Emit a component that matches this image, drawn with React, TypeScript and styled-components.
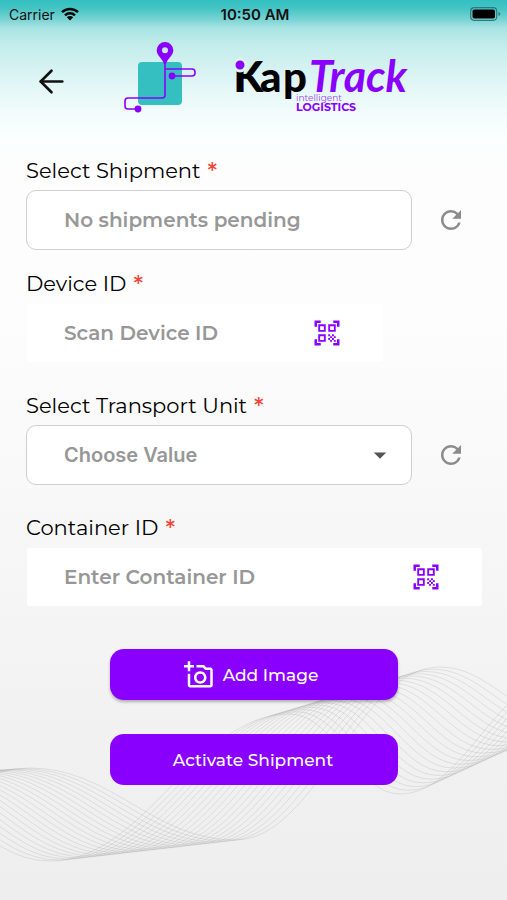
import React, { useId } from "react";
import styled, { createGlobalStyle } from "styled-components";
import { ArrowLeft } from "lucide-react";
import { MdArrowDropDown, MdOutlineAddAPhoto, MdQrCodeScanner, MdRefresh } from "react-icons/md";

const purple = "#8a00ff";
const teal = "#36bfc1";

const GlobalStyle = createGlobalStyle`
  * { box-sizing: border-box; }
  body {
    margin: 0;
    font-family: Montserrat, Inter, "Liberation Sans", sans-serif;
    color: #111;
  }
  button, input, select { font: inherit; }
`;

const Screen = styled.div`
  position: relative;
  isolation: isolate;
  min-height: 100vh;
  overflow: hidden;
  background:
    linear-gradient(180deg, #33bfc0 0, #44c4c5 8px, #72d1d1 18px, #a8e3e3 28px, #c2eceb 44px, #e2f6f6 84px, #f4fcfc 116px, #fbffff 140px, rgba(253, 253, 253, 0) 172px),
    linear-gradient(180deg, #fefefe 0, #fdfdfd 300px, #f8f8f8 500px, #f2f2f2 700px, #eeeeee 900px);
`;

const Waves = styled.svg`
  position: absolute;
  z-index: -1;
  left: 0;
  top: 650px;
  width: 100%;
  height: 230px;
  fill: none;
  stroke: #8c8c8c;
  stroke-opacity: 0.22;
  stroke-width: 0.9;
`;

const StatusBar = styled.div`
  display: grid;
  grid-template-columns: 1fr auto 1fr;
  align-items: center;
  height: 28px;
  padding: 0 6px 0 9px;
  font-family: Inter, sans-serif;
  font-size: 14px;
`;

const Carrier = styled.span`
  display: flex;
  align-items: center;
  gap: 6px;
`;

const Clock = styled.time`
  font-size: 15px;
  font-weight: 600;
`;

const BatteryIcon = styled.svg`
  justify-self: end;
`;

const Header = styled.header`
  display: flex;
  align-items: center;
  height: 106px;
  padding: 0 0 8px 29px;
`;

const BackButton = styled.button`
  display: flex;
  align-items: center;
  justify-content: center;
  width: 44px;
  height: 44px;
  margin: 8px 50px 0 0;
  padding: 0;
  border: 0;
  background: none;
  color: #111;
`;

const Brand = styled.svg`
  flex: none;
`;

const WordmarkSvg = styled(Brand)`
  margin-left: 38px;
  font-family: Lato, sans-serif;
`;

const Form = styled.form`
  display: flex;
  flex-direction: column;
  padding: 24px 24px 0 26px;
`;

const Field = styled.div<{ $space: number }>`
  margin-bottom: ${(p) => p.$space}px;
`;

const Label = styled.label`
  display: flex;
  gap: 7px;
  height: 32px;
  color: #000;
  font-size: 21px;
  line-height: 26px;
`;

const Star = styled.span`
  font-size: 24px;
  font-weight: 500;
  line-height: 28px;
  color: #f44336;
`;

const Row = styled.div`
  display: flex;
  align-items: center;
`;

const Control = styled.div<{ $outlined?: boolean; $inset?: number }>`
  position: relative;
  flex: 1;
  min-width: 0;
  display: flex;
  align-items: center;
  height: 60px;
  margin-right: ${(p) => p.$inset ?? 0}px;
  border: 1px solid ${(p) => (p.$outlined ? "#cfcfcf" : "transparent")};
  border-radius: ${(p) => (p.$outlined ? 10 : 4)}px;
  background: #fff;
  background-clip: padding-box;
`;

const TextInput = styled.input`
  flex: 1;
  min-width: 0;
  height: 100%;
  padding: 0 0 0 37px;
  border: 0;
  outline: 0;
  border-radius: 9px;
  background: none;
  font-size: 20px;
  font-weight: 600;
  &::placeholder { color: #979797; opacity: 1; }
`;

const Select = styled.select`
  appearance: none;
  width: 100%;
  height: 100%;
  padding: 0 50px 0 37px;
  border: 0;
  outline: 0;
  border-radius: 9px;
  background: none;
  color: #979797;
  font-family: Inter, sans-serif;
  font-size: 20px;
  font-weight: 600;
`;

const Caret = styled(MdArrowDropDown)`
  position: absolute;
  right: 16px;
  color: #555;
  pointer-events: none;
`;

const ScanButton = styled.button`
  display: flex;
  align-items: center;
  justify-content: center;
  width: 44px;
  height: 44px;
  margin-right: 34px;
  padding: 0;
  border: 0;
  background: none;
  color: ${purple};
`;

const RefreshButton = styled.button`
  display: flex;
  align-items: center;
  justify-content: center;
  width: 44px;
  height: 44px;
  margin: 0 10px 0 17px;
  padding: 0;
  border: 0;
  background: none;
  color: #8b8b8b;
`;

const Actions = styled.div`
  display: flex;
  flex-direction: column;
  gap: 34px;
  margin: 0 85px 0 84px;
`;

const ActionButton = styled.button<{ $raised?: boolean }>`
  display: flex;
  align-items: center;
  justify-content: center;
  gap: 9px;
  height: 51px;
  padding: 0 ${(p) => (p.$raised ? 6 : 2)}px 0 0;
  border: 0;
  border-radius: 14px;
  background: ${purple};
  box-shadow: ${(p) => (p.$raised ? "0 2px 3px rgba(0, 0, 0, 0.28)" : "none")};
  color: #fff;
  font-size: 17px;
  font-weight: 500;
`;

type Point = [number, number];

// Alternating crests and troughs of the ribbon's two outer strands.
const outerA: Point[] = [[-170, 206], [30, 118], [235, 190], [440, 17], [560, 66], [730, 10]];
const outerB: Point[] = [[-340, 206], [-120, 130], [50, 211], [290, 64], [400, 144], [560, 28]];

function wavePath(points: Point[]) {
  return points.slice(1).reduce((d, [x, y], i) => {
    const [px, py] = points[i];
    const bend = (x - px) * 0.4;
    return `${d}C${px + bend} ${py} ${x - bend} ${y} ${x} ${y}`;
  }, `M${points[0][0]} ${points[0][1]}`);
}

const strandCount = 22;
const strands = Array.from({ length: strandCount }, (_, n) => {
  const t = n / (strandCount - 1);
  return wavePath(
    outerA.map(([x, y], i): Point => [x + (outerB[i][0] - x) * t, y + (outerB[i][1] - y) * t]),
  );
});

function RouteMark() {
  return (
    <Brand width="74" height="74" viewBox="0 0 74 74" role="img" aria-label="Route">
      <rect x="15" y="22" width="44" height="43" rx="4" fill={teal} />
      <g fill="none" stroke={purple} strokeWidth="1.6">
        <path d="M42 20V55q0 3-3 3H5q-3 0-3 3v5q0 3 3 3H15" />
        <path d="M42 29H69q3 0 3 3v1q0 3-3 3H49" />
      </g>
      <circle cx="49" cy="36" r="3.4" fill={purple} />
      <circle cx="15" cy="69" r="3.4" fill={purple} />
      <path
        fill={purple}
        fillRule="evenodd"
        d="M42 2a8.3 8.3 0 0 0-8.3 8.3C33.7 16 40 19 41 24h2C44 19 50.3 16 50.3 10.3A8.3 8.3 0 0 0 42 2Zm0 5.3a3 3 0 1 1 0 6 3 3 0 0 1 0-6Z"
      />
    </Brand>
  );
}

function Wordmark() {
  return (
    <WordmarkSvg width="178" height="78" viewBox="0 -16 178 78" role="img" aria-label="iKapTrack intelligent logistics">
      <text y="38" fontSize="42" fontWeight="900">
        <tspan x="-1">ı</tspan>
        <tspan x="-1">K</tspan>
        <tspan x="25">a</tspan>
        <tspan x="48">p</tspan>
      </text>
      <circle cx="5" cy="11" r="6" fill={purple} stroke="#dcf4f4" strokeWidth="3" />
      <text x="74" y="38" fontSize="43" fontWeight="700" fontStyle="italic" fill={purple}>Track</text>
      <text x="61" y="47" fontSize="9" fontFamily="Montserrat" fill="#9a45f5">intelligent</text>
      <text x="61" y="57" fontSize="11" fontWeight="700" fontFamily="Montserrat" fill={purple}>LOGISTICS</text>
    </WordmarkSvg>
  );
}

function RequiredLabel({ htmlFor, children }: { htmlFor: string; children: React.ReactNode }) {
  return (
    <Label htmlFor={htmlFor}>
      {children}
      <Star>*</Star>
    </Label>
  );
}

export default function App() {
  const id = useId();
  return (
    <Screen>
      <GlobalStyle />
      <Waves viewBox="0 0 507 230" preserveAspectRatio="none" aria-hidden="true">
        {strands.map((d, i) => <path key={i} d={d} />)}
      </Waves>
      <StatusBar>
        <Carrier>
          Carrier
          <svg width="18" height="14" viewBox="0 0 18 14" aria-label="Wi-Fi">
            <g fill="none" stroke="#080808" strokeWidth="2.5">
              <path d="M1 5.200a11.500 11.500 0 0 1 16 0" />
              <path d="M4 8.300a7.200 7.200 0 0 1 10 0" />
            </g>
            <path d="M9 13.500 5.800 10.300a4.600 4.600 0 0 1 6.400 0Z" fill="#080808" />
          </svg>
        </Carrier>
        <Clock>10:50 AM</Clock>
        <BatteryIcon width="31" height="14" viewBox="0 0 31 14" aria-label="Battery full">
          <rect x="0.7" y="0.7" width="26" height="12.6" rx="3.5" fill="none" stroke="#287c7d" strokeWidth="1.2" />
          <rect x="2.5" y="2.5" width="22.5" height="9" rx="1.8" fill="#000" />
          <path d="M28.500 5v4q1.800-.6 1.800-2t-1.800-2Z" fill="#287c7d" />
        </BatteryIcon>
      </StatusBar>
      <Header>
        <BackButton type="button" aria-label="Back">
          <ArrowLeft size={37} strokeWidth={1.7} />
        </BackButton>
        <RouteMark />
        <Wordmark />
      </Header>
      <Form onSubmit={(e) => e.preventDefault()}>
        <Field $space={21}>
          <RequiredLabel htmlFor={`${id}-shipment`}>Select Shipment</RequiredLabel>
          <Row>
            <Control $outlined>
              <TextInput id={`${id}-shipment`} placeholder="No shipments pending" readOnly />
            </Control>
            <RefreshButton type="button" aria-label="Refresh shipments"><MdRefresh size={30} /></RefreshButton>
          </Row>
        </Field>
        <Field $space={30}>
          <RequiredLabel htmlFor={`${id}-device`}>Device ID</RequiredLabel>
          <Row>
            <Control $inset={99}>
              <TextInput id={`${id}-device`} placeholder="Scan Device ID" />
              <ScanButton type="button" aria-label="Scan device"><MdQrCodeScanner size={30} /></ScanButton>
            </Control>
          </Row>
        </Field>
        <Field $space={30}>
          <RequiredLabel htmlFor={`${id}-unit`}>Select Transport Unit</RequiredLabel>
          <Row>
            <Control $outlined>
              <Select id={`${id}-unit`} defaultValue="">
                <option value="">Choose Value</option>
              </Select>
              <Caret size={30} />
            </Control>
            <RefreshButton type="button" aria-label="Refresh transport units"><MdRefresh size={30} /></RefreshButton>
          </Row>
        </Field>
        <Field $space={42}>
          <RequiredLabel htmlFor={`${id}-container`}>Container ID</RequiredLabel>
          <Row>
            <Control>
              <TextInput id={`${id}-container`} placeholder="Enter Container ID" />
              <ScanButton type="button" aria-label="Scan container"><MdQrCodeScanner size={30} /></ScanButton>
            </Control>
          </Row>
        </Field>
        <Actions>
          <ActionButton type="button" $raised>
            <MdOutlineAddAPhoto size={30} />
            Add Image
          </ActionButton>
          <ActionButton type="submit">Activate Shipment</ActionButton>
        </Actions>
      </Form>
    </Screen>
  );
}
